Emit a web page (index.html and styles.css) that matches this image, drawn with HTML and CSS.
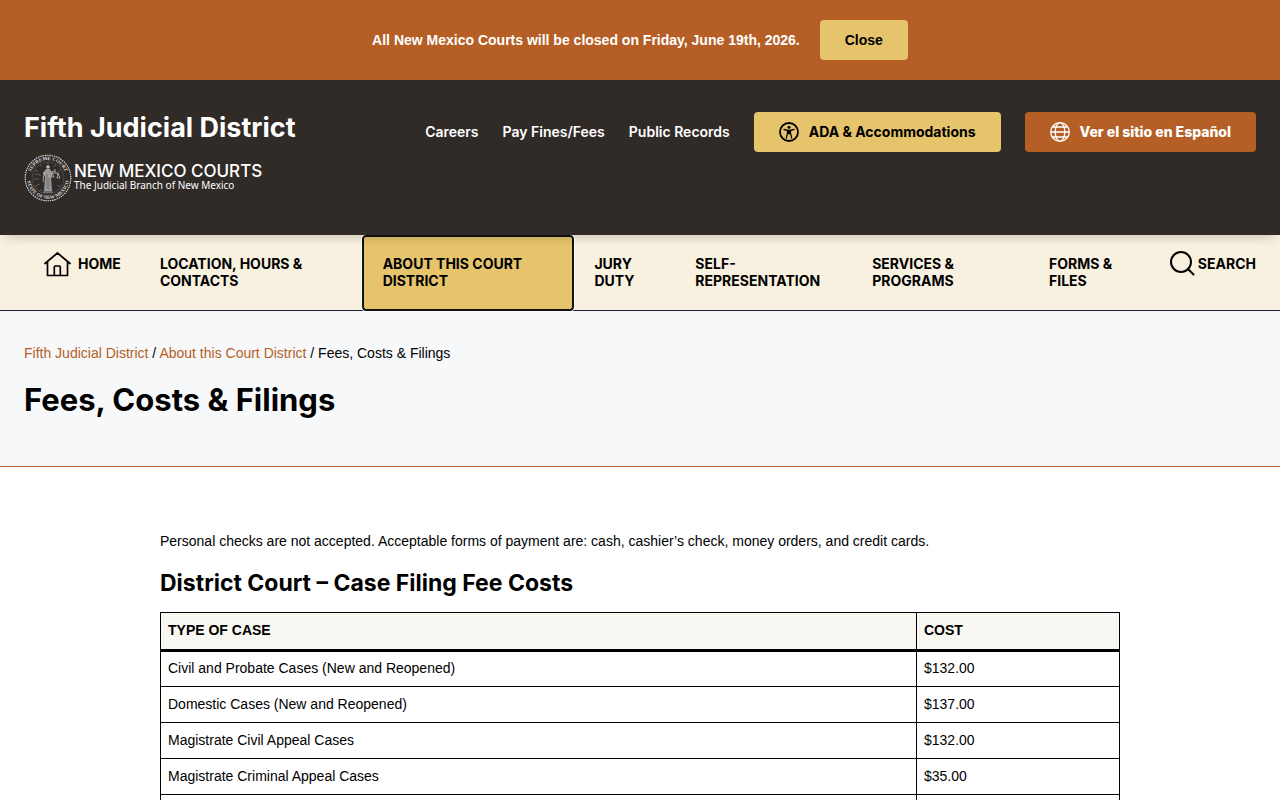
FILE: index.html
```html
<!DOCTYPE html>
<html lang="en">

<head>
  <meta charset="UTF-8">
  <meta name="viewport" content="width=device-width, initial-scale=1.0">
  <title>Fees, Costs &amp; Filings - Fifth Judicial District</title>
  <link rel="stylesheet" href="styles.css">
</head>

<body>
  <div class="alert" id="alert">
    <p>All New Mexico Courts will be closed on Friday, June 19th, 2026.</p>
    <button type="button" class="btn btn-gold" id="close-alert">Close</button>
  </div>

  <header class="header">
    <div class="brand">
      <a class="site-name" href="#">Fifth Judicial District</a>
      <a class="logo" href="#">
        <svg class="seal" viewBox="0 0 48 48" aria-hidden="true">
          <defs>
            <path id="arc-top" d="M6 24a18 18 0 0 1 36 0"/>
            <path id="arc-bottom" d="M3 24a21 21 0 0 0 42 0"/>
          </defs>
          <circle cx="24" cy="24" r="22.800" fill="none" stroke="#ddd" stroke-width="1.100" stroke-dasharray="1.500 .8"/>
          <circle cx="24" cy="24" r="16" fill="none" stroke="#666" stroke-width=".5"/>
          <text class="seal-text"><textPath href="#arc-top" startOffset="50%" text-anchor="middle">SUPREME COURT</textPath></text>
          <text class="seal-text"><textPath href="#arc-bottom" startOffset="50%" text-anchor="middle">STATE OF NEW MEXICO</textPath></text>
          <path d="M24 11v-3M18 13l-2-3M30 13l2-3M14 18l-3-2M34 18l3-2M17 21l-6-1M15 25h-5M16 30l-5 2M33 31l4 2M18 35l-3 3" stroke="#777" stroke-width=".6" fill="none"/>
          <circle cx="24" cy="13" r="1.800" fill="#bbb"/>
          <path d="M22 15h4l2 4-1 4 1 14h-8l1-14-2-4z" fill="#999"/>
          <path d="M20 18l-1 10M27 18l4-1M31 15v4M28 19h6M28 19l-1 4h3zM34 19l-1 5h3z" stroke="#bbb" stroke-width=".8" fill="none"/>
          <path d="M23 20v15M25 24v12" stroke="#555" stroke-width=".6"/>
          <path d="M19 38h10" stroke="#aaa"/>
        </svg>
        <span class="logo-text">
          <span class="logo-title">NEW MEXICO COURTS</span>
          <span class="logo-sub">The Judicial Branch of New Mexico</span>
        </span>
      </a>
    </div>
    <div class="top-links">
      <a href="#">Careers</a>
      <a href="#">Pay Fines/Fees</a>
      <a href="#">Public Records</a>
      <a class="btn btn-gold" href="#">
        <svg width="20" height="20" viewBox="0 0 20 20" aria-hidden="true">
          <circle cx="10" cy="10" r="9" fill="none" stroke="#000" stroke-width="1.800"/>
          <circle cx="10" cy="5.300" r="1.500"/>
          <path d="M5 7.500l3.500.8v3L7.300 16M15 7.500l-3.500.8v3l1.200 4.700" fill="none" stroke="#000" stroke-width="1.300" stroke-linecap="round"/>
          <path d="M8.200 7.700h3.600l-.2 4.600H8.400z"/>
        </svg>
        ADA &amp; Accommodations
      </a>
      <a class="btn btn-rust" href="#">
        <svg width="20" height="20" viewBox="0 0 20 20" fill="none" stroke="#fff" stroke-width="1.300" aria-hidden="true">
          <circle cx="10" cy="10" r="9.300"/>
          <ellipse cx="10" cy="10" rx="4.800" ry="9.300"/>
          <path d="M.6 10h18.800M2.300 5h15.400M2.300 15h15.400"/>
        </svg>
        Ver el sitio en Español
      </a>
    </div>
  </header>

  <nav class="nav">
    <a class="home" href="#">
      <svg width="27" height="25" viewBox="0 0 27 25" fill="none" stroke="#000" stroke-width="1.700" stroke-linejoin="round" stroke-linecap="round" aria-hidden="true">
        <path d="M1 11.500L13.500 1 26 11.500M3.500 9.800V23.500h20V9.800M10.300 23.500v-8.500q0-1 1-1h4q1 0 1 1v8.500"/>
      </svg>
      <span>HOME</span>
    </a>
    <a href="#">LOCATION, HOURS &amp; CONTACTS</a>
    <a class="active" href="#">ABOUT THIS COURT DISTRICT</a>
    <a href="#">JURY DUTY</a>
    <a href="#">SELF-REPRESENTATION</a>
    <a href="#">SERVICES &amp; PROGRAMS</a>
    <a href="#">FORMS &amp; FILES</a>
    <button type="button" class="search">
      <svg width="25" height="25" viewBox="0 0 25 25" fill="none" stroke="#000" stroke-width="2" stroke-linecap="round" aria-hidden="true">
        <circle cx="11" cy="11" r="10"/>
        <path d="M18 18l5.500 5.500"/>
      </svg>
      SEARCH
    </button>
  </nav>

  <div class="page-head">
    <div class="breadcrumbs">
      <a href="#">Fifth Judicial District</a> / <a href="#">About this Court District</a> / Fees, Costs &amp; Filings
    </div>
    <h1>Fees, Costs &amp; Filings</h1>
  </div>

  <main class="content">
    <p>Personal checks are not accepted. Acceptable forms of payment are: cash, cashier’s check, money orders, and credit cards.</p>
    <h2>District Court – Case Filing Fee Costs</h2>
    <table>
      <thead>
        <tr>
          <th scope="col" class="type">TYPE OF CASE</th>
          <th scope="col">COST</th>
        </tr>
      </thead>
      <tbody>
        <tr>
          <td>Civil and Probate Cases (New and Reopened)</td>
          <td>$132.00</td>
        </tr>
        <tr>
          <td>Domestic Cases (New and Reopened)</td>
          <td>$137.00</td>
        </tr>
        <tr>
          <td>Magistrate Civil Appeal Cases</td>
          <td>$132.00</td>
        </tr>
        <tr>
          <td>Magistrate Criminal Appeal Cases</td>
          <td>$35.00</td>
        </tr>
        <tr>
          <td>&nbsp;</td>
          <td>&nbsp;</td>
        </tr>
      </tbody>
    </table>
  </main>

  <script>
    document.getElementById("close-alert").addEventListener("click", function () {
      document.getElementById("alert").remove();
    });
  </script>
</body>

</html>
```

FILE: styles.css
```css
* {
  box-sizing: border-box;
}

body {
  margin: 0;
  font-family: "Liberation Sans", Arial, sans-serif;
  font-size: 14px;
  line-height: 20px;
  color: #000;
  background-color: #fff;
}

a {
  color: inherit;
  text-decoration: none;
}

svg {
  flex: none;
}

/* closure notice */
.alert {
  display: flex;
  align-items: center;
  justify-content: center;
  gap: 20px;
  padding: 20px 24px;
  background-color: #b55f26;
  color: #fff;
  font-weight: bold;
}

.alert p {
  margin: 0;
}

.btn {
  display: flex;
  align-items: center;
  gap: 10px;
  height: 40px;
  padding: 0 25px;
  border: none;
  border-radius: 4px;
  font-family: inherit;
  font-size: 14px;
  font-weight: bold;
  white-space: nowrap;
  cursor: pointer;
}

.btn-gold {
  background-color: #e6c46c;
  color: #000;
}

.btn-rust {
  background-color: #b55f26;
  color: #fff;
}

/* header */
.header {
  position: relative;
  display: flex;
  justify-content: space-between;
  align-items: flex-start;
  padding: 32px 24px;
  background-color: #312b28;
  color: #fff;
  box-shadow: 0 8px 10px -6px rgba(0, 0, 0, 0.2);
}

.site-name {
  display: block;
  font-family: Inter, sans-serif;
  font-size: 27px;
  font-weight: 700;
  line-height: 32px;
  white-space: nowrap;
}

.logo {
  display: flex;
  align-items: center;
  gap: 2px;
  margin-top: 10px;
  padding-bottom: 1px;
}

.seal {
  width: 48px;
  height: 48px;
}

.seal-text {
  font-family: "Liberation Serif", serif;
  font-size: 5px;
  font-weight: bold;
  fill: #ddd;
}

.logo-text {
  display: flex;
  flex-direction: column;
  padding-bottom: 2px;
  white-space: nowrap;
}

.logo-title {
  font-family: Inter, sans-serif;
  font-size: 17px;
  font-weight: 500;
  line-height: 15px;
}

.logo-sub {
  font-family: "Noto Sans", sans-serif;
  font-size: 10px;
  line-height: 12px;
}

.top-links {
  display: flex;
  align-items: center;
  gap: 24px;
  font-family: Inter, sans-serif;
  font-size: 14px;
  font-weight: 600;
  white-space: nowrap;
}

.top-links .btn {
  font-weight: 700;
}

.top-links .btn-rust {
  font-weight: 800;
}

/* main menu */
.nav {
  display: grid;
  grid-template-columns: 116fr 222fr 213fr 101fr 177fr 177fr 141fr 85fr;
  padding: 0 24px;
  background-color: #f8f1df;
  border-bottom: 1px solid #1e1a3a;
  font-family: Inter, sans-serif;
  font-size: 14px;
  font-weight: 700;
  line-height: 17px;
}

.nav a {
  padding: 20px 20px 21px;
}

.nav .home {
  display: flex;
  align-items: flex-start;
  gap: 7px;
  padding: 17px 0 0 20px;
}

.home span {
  padding-top: 3px;
}

.nav .active {
  margin-bottom: -1px;
  padding: 18px 19px 20px;
  border: 2px solid #111;
  border-radius: 4px;
  background-color: #e6c46c;
  outline: 1px solid #fff;
}

.search {
  display: flex;
  align-items: center;
  justify-content: flex-end;
  align-self: start;
  gap: 3px;
  margin-top: 16px;
  padding: 0;
  border: none;
  background: none;
  color: #000;
  font: inherit;
  cursor: pointer;
}

/* page title */
.page-head {
  padding: 32px 24px 48px;
  background-color: #f7f8fa;
  border-bottom: 1px solid #b55f26;
}

.breadcrumbs a {
  color: #b55f26;
}

h1,
h2 {
  font-family: Inter, sans-serif;
  font-weight: 700;
}

h1 {
  margin: 19px 0 0;
  font-size: 31px;
  line-height: 36px;
}

.content {
  max-width: 960px;
  margin: 64px auto 0;
}

.content p {
  margin: 0;
}

h2 {
  margin: 16px 0 13px;
  font-size: 23px;
  line-height: 32px;
}

table {
  width: 100%;
  border-collapse: collapse;
}

th,
td {
  height: 36px;
  padding: 0 7px 2px;
  border: 1px solid #000;
  text-align: left;
}

th {
  height: 38px;
  background-color: #f8f7f2;
  border-bottom-width: 3px;
}

.type {
  width: 756px;
}
```
